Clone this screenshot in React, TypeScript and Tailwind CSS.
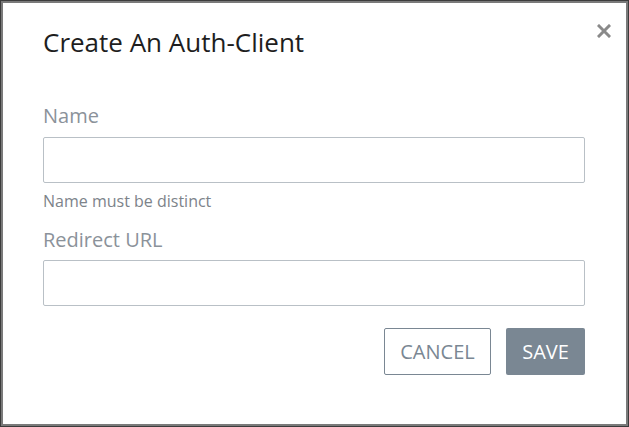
export default function App() {
  return (
    <div className="w-[629px] h-[427px] border border-[#3c3c3c]">
      <div className="h-full border-2 border-[#7a7a7a] bg-white font-['Open_Sans',sans-serif] relative">
        {/* close */}
        <button className="absolute right-[15px] top-[21px] w-[14px] h-[14px] text-[#8a8a8a]">
          <svg viewBox="0 0 14 14" width="14" height="14">
            <path d="M2 2 L12 12 M12 2 L2 12" stroke="currentColor" strokeWidth="3" strokeLinecap="square" />
          </svg>
        </button>
        <div className="pl-[40px] pr-[41px] pt-[21px]">
          <h2 className="text-[26px] leading-[36px] text-[#1e1e1e] font-medium">Create An Auth-Client</h2>
          <label className="mt-[42px] block text-[20px] leading-[28px] text-[#8b929a]">Name</label>
          <input className="mt-[7px] block w-full h-[46px] border border-[#b9c0c6] rounded-[2px] outline-none" />
          <p className="mt-[7px] text-[16px] leading-[22px] text-[#7d838a]">Name must be distinct</p>
          <label className="mt-[14px] block text-[20px] leading-[28px] text-[#8b929a]">Redirect URL</label>
          <input className="mt-[6px] block w-full h-[46px] border border-[#b9c0c6] rounded-[2px] outline-none" />
          <div className="mt-[22px] flex justify-end gap-[15px]">
            <button className="w-[107px] h-[47px] border border-[#7a8793] rounded-[2px] text-[20px] text-[#7a8793] uppercase">Cancel</button>
            <button className="w-[79px] h-[47px] bg-[#7a8793] rounded-[2px] text-[20px] text-white uppercase">Save</button>
          </div>
        </div>
      </div>
    </div>
  );
}
